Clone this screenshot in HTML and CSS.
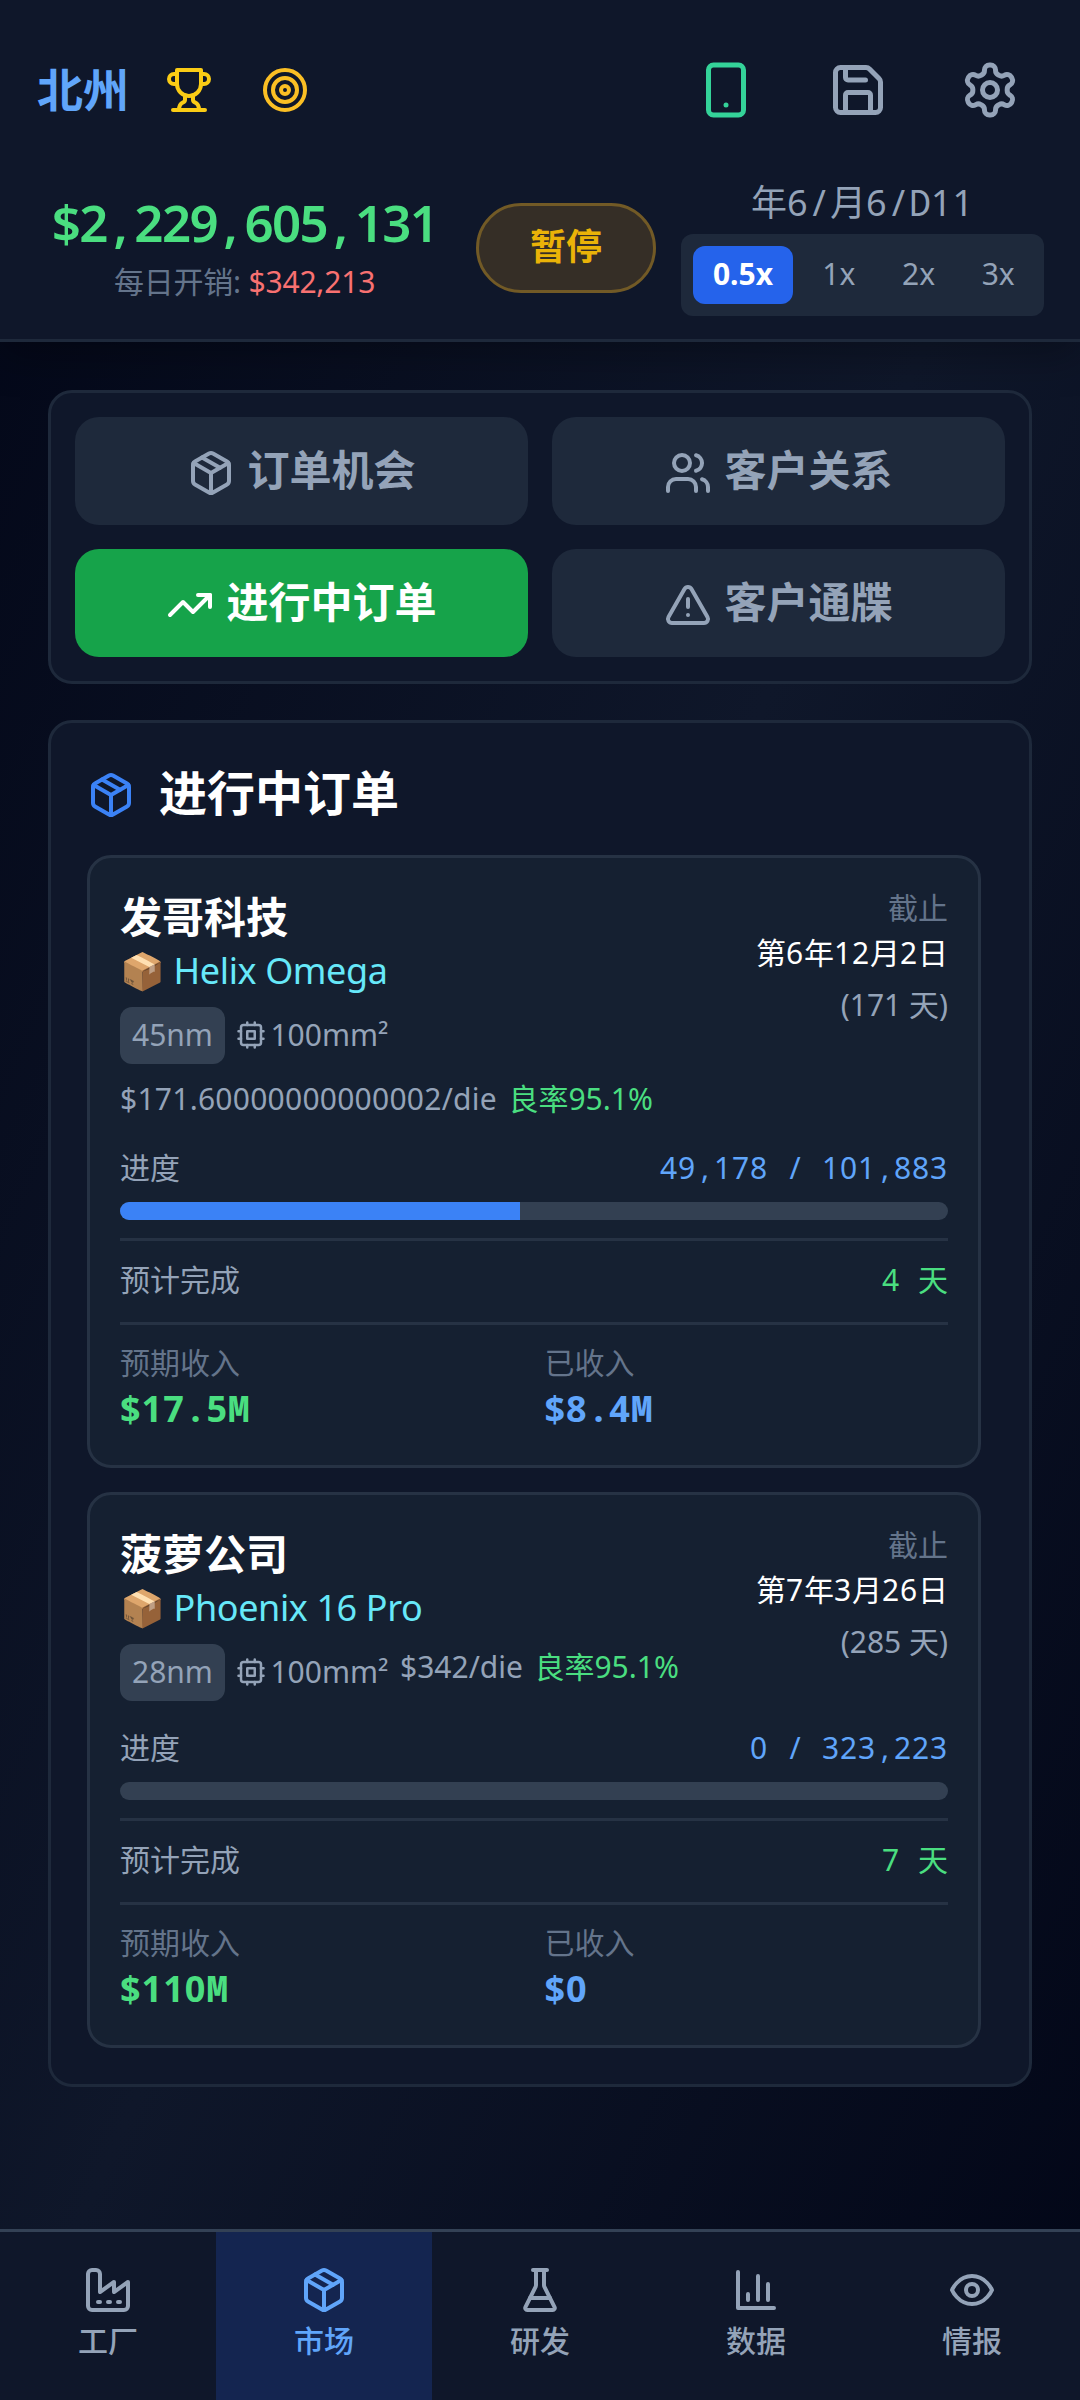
FILE: index.html
```html
<!DOCTYPE html>
<html lang="zh-CN">
<head>
<meta charset="utf-8">
<title>市场</title>
<link rel="stylesheet" href="styles.css">
</head>
<body>
<svg class="defs" width="0" height="0" aria-hidden="true">
  <symbol id="package" viewBox="0 0 24 24"><path d="m7.5 4.27 9 5.15"/><path d="M21 8a2 2 0 0 0-1-1.73l-7-4a2 2 0 0 0-2 0l-7 4A2 2 0 0 0 3 8v8a2 2 0 0 0 1 1.73l7 4a2 2 0 0 0 2 0l7-4A2 2 0 0 0 21 16Z"/><path d="m3.3 7 8.7 5 8.7-5"/><path d="M12 22V12"/></symbol>
  <symbol id="cpu" viewBox="0 0 24 24"><rect x="4" y="4" width="16" height="16" rx="2"/><rect x="9" y="9" width="6" height="6"/><path d="M15 2v2M15 20v2M2 15h2M2 9h2M20 15h2M20 9h2M9 2v2M9 20v2"/></symbol>
</svg>
<header class="header">
  <div class="toolbar">
    <h1 class="brand">北州</h1>
    <span class="icon-btn"><svg class="icon yellow" viewBox="0 0 24 24"><path d="M6 9H4.5a2.5 2.5 0 0 1 0-5H6"/><path d="M18 9h1.500a2.500 2.500 0 0 0 0-5H18"/><path d="M4 22h16"/><path d="M10 14.660V17c0 .55-.47.98-.97 1.210C7.850 18.750 7 20.240 7 22"/><path d="M14 14.660V17c0 .55.47.98.97 1.210C16.150 18.750 17 20.240 17 22"/><path d="M18 2H6v7a6 6 0 0 0 12 0V2Z"/></svg></span>
    <span class="icon-btn"><svg class="icon amber" viewBox="0 0 24 24"><circle cx="12" cy="12" r="10"/><circle cx="12" cy="12" r="6"/><circle cx="12" cy="12" r="2"/></svg></span>
    <div class="tools">
      <svg class="icon big emerald" viewBox="0 0 24 24"><rect x="5" y="2" width="14" height="20" rx="2"/><path d="M12 18h.01"/></svg>
      <svg class="icon big" viewBox="0 0 24 24"><path d="M15.200 3a2 2 0 0 1 1.400.6l3.800 3.800a2 2 0 0 1 .6 1.400V19a2 2 0 0 1-2 2H5a2 2 0 0 1-2-2V5a2 2 0 0 1 2-2z"/><path d="M17 21v-7a1 1 0 0 0-1-1H8a1 1 0 0 0-1 1v7"/><path d="M7 3v4a1 1 0 0 0 1 1h7"/></svg>
      <svg class="icon big" viewBox="0 0 24 24"><path d="M12.220 2h-.44a2 2 0 0 0-2 2v.18a2 2 0 0 1-1 1.730l-.43.25a2 2 0 0 1-2 0l-.15-.08a2 2 0 0 0-2.730.73l-.22.38a2 2 0 0 0 .73 2.730l.15.1a2 2 0 0 1 1 1.720v.51a2 2 0 0 1-1 1.740l-.15.09a2 2 0 0 0-.73 2.730l.22.38a2 2 0 0 0 2.730.73l.15-.08a2 2 0 0 1 2 0l.43.25a2 2 0 0 1 1 1.730V20a2 2 0 0 0 2 2h.44a2 2 0 0 0 2-2v-.18a2 2 0 0 1 1-1.730l.43-.25a2 2 0 0 1 2 0l.15.08a2 2 0 0 0 2.730-.73l.22-.39a2 2 0 0 0-.73-2.730l-.15-.08a2 2 0 0 1-1-1.740v-.5a2 2 0 0 1 1-1.740l.15-.09a2 2 0 0 0 .73-2.730l-.22-.38a2 2 0 0 0-2.730-.73l-.15.08a2 2 0 0 1-2 0l-.43-.25a2 2 0 0 1-1-1.730V4a2 2 0 0 0-2-2z"/><circle cx="12" cy="12" r="3"/></svg>
    </div>
  </div>
  <div class="status">
    <div class="funds">
      <div class="money mono">$2<i>,</i>229<i>,</i>605<i>,</i>131</div>
      <div class="daily">每日开销: <span class="red">$342,213</span></div>
    </div>
    <button class="pause"><span>暂停</span></button>
    <div class="clock">
      <div class="date mono"><b>年</b>6<i>/</i><b>月</b>6<i>/</i><i class="narrow">D</i>11</div>
      <div class="speeds"><span class="speed on">0.5x</span><span class="speed">1x</span><span class="speed">2x</span><span class="speed">3x</span></div>
    </div>
  </div>
</header>

<main class="main">
  <section class="panel tabs">
    <button class="tab"><svg class="icon"><use href="#package"/></svg><span>订单机会</span></button>
    <button class="tab"><svg class="icon" viewBox="0 0 24 24"><path d="M16 21v-2a4 4 0 0 0-4-4H6a4 4 0 0 0-4 4v2"/><circle cx="9" cy="7" r="4"/><path d="M22 21v-2a4 4 0 0 0-3-3.870"/><path d="M16 3.130a4 4 0 0 1 0 7.750"/></svg><span>客户关系</span></button>
    <button class="tab on"><svg class="icon" viewBox="0 0 24 24"><path d="M22 7l-8.500 8.500-5-5L2 17"/><path d="M16 7h6v6"/></svg><span>进行中订单</span></button>
    <button class="tab"><svg class="icon" viewBox="0 0 24 24"><path d="m21.730 18-8-14a2 2 0 0 0-3.480 0l-8 14A2 2 0 0 0 4 21h16a2 2 0 0 0 1.730-3"/><path d="M12 9v4"/><path d="M12 17h.01"/></svg><span>客户通牒</span></button>
  </section>

  <section class="panel orders">
    <h2 class="title"><svg class="icon"><use href="#package"/></svg><span>进行中订单</span></h2>
    <div class="list">
      <article class="card">
        <div class="top">
          <div class="info">
            <h3 class="client">发哥科技</h3>
            <div class="product"><span class="emoji">📦</span> Helix Omega</div>
            <div class="specs">
              <span class="node">45nm</span>
              <span class="die"><svg class="icon tiny"><use href="#cpu"/></svg>100mm²</span>
              <span class="price long">$171.60000000000002/die</span>
              <span class="green">良率95.1%</span>
            </div>
          </div>
          <div class="deadline">
            <div class="dim">截止</div>
            <div class="due mono"><b>第</b>6<b>年</b>12<b>月</b>2<b>日</b></div>
            <div class="left">(171 天)</div>
          </div>
        </div>
        <div class="row"><span>进度</span><span class="mono blue">49<i>,</i>178<i> </i><i>/</i><i> </i>101<i>,</i>883</span></div>
        <div class="bar"><div class="fill" style="width:48.27%"></div></div>
        <div class="row eta"><span>预计完成</span><span class="mono green">4<i> </i><b>天</b></span></div>
        <div class="income">
          <div><div class="dim">预期收入</div><div class="sum mono green">$17<i>.</i>5<i class="narrow">M</i></div></div>
          <div><div class="dim">已收入</div><div class="sum mono blue">$8<i>.</i>4<i class="narrow">M</i></div></div>
        </div>
      </article>
      <article class="card">
        <div class="top">
          <div class="info">
            <h3 class="client">菠萝公司</h3>
            <div class="product"><span class="emoji">📦</span> Phoenix 16 Pro</div>
            <div class="specs">
              <span class="node">28nm</span>
              <span class="die"><svg class="icon tiny"><use href="#cpu"/></svg>100mm²</span>
              <span class="price">$342/die</span>
              <span class="green">良率95.1%</span>
            </div>
          </div>
          <div class="deadline">
            <div class="dim">截止</div>
            <div class="due mono"><b>第</b>7<b>年</b>3<b>月</b>26<b>日</b></div>
            <div class="left">(285 天)</div>
          </div>
        </div>
        <div class="row"><span>进度</span><span class="mono blue">0<i> </i><i>/</i><i> </i>323<i>,</i>223</span></div>
        <div class="bar"><div class="fill" style="width:0%"></div></div>
        <div class="row eta"><span>预计完成</span><span class="mono green">7<i> </i><b>天</b></span></div>
        <div class="income">
          <div><div class="dim">预期收入</div><div class="sum mono green">$110<i class="narrow">M</i></div></div>
          <div><div class="dim">已收入</div><div class="sum mono blue">$0</div></div>
        </div>
      </article>
    </div>
  </section>
</main>

<nav class="nav">
  <a class="item"><svg class="icon" viewBox="0 0 24 24"><path d="M2 20a2 2 0 0 0 2 2h16a2 2 0 0 0 2-2V8l-7 5V8l-7 5V4a2 2 0 0 0-2-2H4a2 2 0 0 0-2 2Z"/><path d="M17 18h1M12 18h1M7 18h1"/></svg><span>工厂</span></a>
  <a class="item on"><svg class="icon"><use href="#package"/></svg><span>市场</span></a>
  <a class="item"><svg class="icon" viewBox="0 0 24 24"><path d="M10 2v7.530a2 2 0 0 1-.21.9L4.720 20.550a1 1 0 0 0 .9 1.450h12.760a1 1 0 0 0 .9-1.450l-5.070-10.120a2 2 0 0 1-.21-.9V2"/><path d="M8.500 2h7"/><path d="M7 16h10"/></svg><span>研发</span></a>
  <a class="item"><svg class="icon" viewBox="0 0 24 24"><path d="M3 3v18h18"/><path d="M18 17V9M13 17V5M8 17v-3"/></svg><span>数据</span></a>
  <a class="item"><svg class="icon" viewBox="0 0 24 24"><path d="M2 12s3-7 10-7 10 7 10 7-3 7-10 7-10-7-10-7Z"/><circle cx="12" cy="12" r="3"/></svg><span>情报</span></a>
</nav>
</body>
</html>
```
FILE: styles.css
```css
* { box-sizing: border-box; margin: 0; padding: 0; }

body {
  width: 1080px;
  height: 2400px;
  display: flex;
  flex-direction: column;
  overflow: hidden;
  background: linear-gradient(to bottom right, #020617, #0f172a, #020617);
  color: #94a3b8;
  font: 30px/45px "Noto Sans", "Noto Sans CJK SC", sans-serif;
}

button { border: 0; font: inherit; color: inherit; }
.defs { position: absolute; }

/* Fixed-pitch figures: digits are spaced to .6em, other marks get a .6em cell */
.mono { letter-spacing: .028em; white-space: nowrap; }
.mono i { display: inline-block; width: .6em; text-align: center; font-style: normal; letter-spacing: 0; white-space: pre; }
.mono b { font-weight: inherit; letter-spacing: 0; }
.mono .narrow { font-family: "Noto Sans Mono", "DejaVu Sans Mono", monospace; line-height: 1; }

.icon {
  width: 48px;
  height: 48px;
  flex: none;
  display: block;
  fill: none;
  stroke: currentColor;
  stroke-width: 2;
  stroke-linecap: round;
  stroke-linejoin: round;
}
.icon.big { width: 60px; height: 60px; }
.icon.tiny { width: 30px; height: 30px; }

.yellow { color: #facc15; }
.amber { color: #fbbf24; }
.emerald { color: #34d399; }
.red { color: #f87171; }
.green { color: #4ade80; }
.blue { color: #60a5fa; }
.dim { color: #64748b; }

.header {
  height: 342px;
  flex: none;
  padding: 36px 36px 24px;
  background: #0f172a;
  border-bottom: 3px solid #1e293b;
  box-shadow: 0 12px 40px rgba(0, 0, 0, .3);
}
.toolbar { display: flex; align-items: center; height: 108px; }
.brand { font-size: 46px; line-height: 60px; width: 93px; margin: -3px 12px 0 0; padding-left: 1px; color: #60a5fa; white-space: nowrap; }
.icon-btn { padding: 24px; }
.tools { display: flex; gap: 72px; margin-left: auto; padding-right: 24px; }

.status { display: flex; justify-content: space-between; height: 171px; padding-top: 36px; }
.funds { width: 415px; text-align: center; }
.money { font-size: 51px; line-height: 60px; font-weight: 600; letter-spacing: -.032em; color: #4ade80; margin-top: 12px; padding-left: 2px; }
.money i { width: .54em; }
.daily { color: #64748b; margin-top: 7px; padding-left: 2px; letter-spacing: -.2px; }
.pause {
  width: 180px;
  height: 90px;
  margin-top: 23px;
  padding-bottom: 4px;
  border: 3px solid #725a26;
  border-radius: 45px;
  background: #352e26;
  color: #eab308;
  font-size: 36px;
  font-weight: 700;
}
.clock { width: 363px; }
.date { font-size: 36px; line-height: 45px; height: 54px; text-align: center; }
.speeds { display: flex; gap: 12px; padding: 12px; height: 82px; border-radius: 12px; background: #1e293b; }
.speed { flex: 1; line-height: 56px; text-align: center; border-radius: 12px; }
.speed.on { flex: 0 0 100px; background: #2563eb; color: #fff; font-weight: 700; }

.main { flex: 1; padding: 47.500px 48px 0; display: flex; flex-direction: column; gap: 36px; }
.panel { border: 3px solid #1e293b; border-radius: 24px; background: #0f172a; }

.tabs { display: grid; grid-template-columns: 1fr 1fr; gap: 24px; padding: 24px; }
.tab {
  display: flex;
  align-items: center;
  justify-content: center;
  gap: 12px;
  height: 108px;
  border-radius: 24px;
  background: #1e293b;
  font-size: 42px;
  font-weight: 700;
}
.tab .icon { margin-top: 4px; }
.tab span { margin-top: -3px; }
.tab.on { background: #16a34a; color: #fff; }

.orders { padding: 36px; }
.title { display: flex; align-items: center; gap: 24px; height: 72px; font-size: 48px; color: #fff; margin-bottom: 24px; }
.title .icon { color: #3b82f6; }
.title span { margin-top: -5px; }
.list { display: flex; flex-direction: column; gap: 24px; padding-right: 12px; }

.card { padding: 30px 30px 32px; border: 3px solid #263244; border-radius: 24px; background: #152031; }
.top { display: flex; justify-content: space-between; margin-bottom: 24px; }
.client { font-size: 42px; line-height: 57px; margin-bottom: 2px; color: #fff; }
.product { font-size: 36px; line-height: 48px; letter-spacing: -.4px; color: #67e8f9; }
.specs { display: flex; flex-wrap: wrap; align-items: flex-start; gap: 12px 11.500px; margin-top: 12px; max-width: 580px; }
.node { padding: 5px 12px 7px; border-radius: 12px; background: #334052; }
.die { display: flex; align-items: center; gap: 4px; height: 56px; }
.price.long { letter-spacing: .25px; }
.deadline { text-align: right; white-space: nowrap; margin-top: -3px; }
.due { color: #fff; line-height: 45px; }
.left { margin-top: 7px; }

.row { display: flex; justify-content: space-between; }
.bar { height: 18px; margin: 12px 0 18px; border-radius: 9px; overflow: hidden; background: #334052; }
.fill { height: 100%; background: #3b82f6; }
.eta { border-top: 3px solid #263244; padding: 16px 0 20px; }
.income { display: grid; grid-template-columns: 1fr 1fr; gap: 21px; border-top: 3px solid #263244; padding-top: 15px; }
.sum { font-size: 36px; line-height: 48px; font-weight: 700; }

.nav { display: grid; grid-template-columns: repeat(5, 1fr); height: 171px; border-top: 3px solid #334155; background: #0f172a; }
.item { display: flex; flex-direction: column; align-items: center; padding-top: 34px; font-weight: 500; }
.item span { margin-top: 4px; }
.item.on { background: #142550; color: #60a5fa; }
```
